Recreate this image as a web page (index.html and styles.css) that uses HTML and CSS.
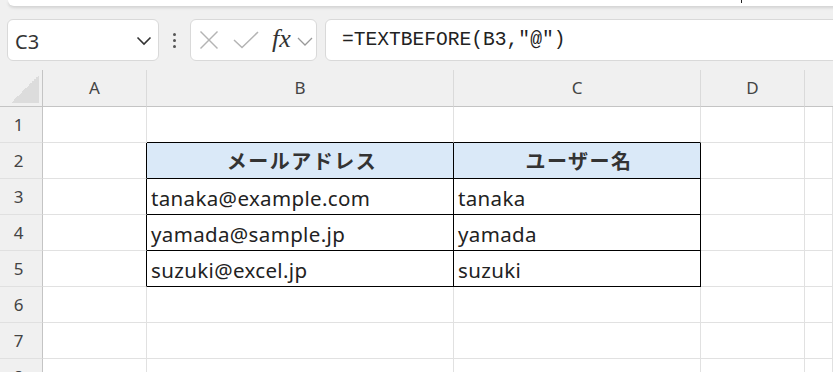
FILE: index.html
```html
<!DOCTYPE html>
<html lang="ja">
<head>
  <meta charset="UTF-8">
  <meta name="viewport" content="width=device-width, initial-scale=1.0">
  <title>TEXTBEFORE</title>
  <link rel="stylesheet" href="styles.css">
</head>
<body>

  <div class="ribbon"><span class="ribbon-tick"></span></div>

  <div class="formula-bar">
    <div class="name-box">
      <span class="name-text">C3</span>
      <svg class="chevron" width="16" height="10" viewBox="0 0 16 10">
        <polyline points="1.5,1.5 8,8 14.5,1.5" fill="none" stroke="#333" stroke-width="1.6"/>
      </svg>
    </div>
    <div class="more-dots">
      <span></span><span></span><span></span>
    </div>
    <div class="fx-box">
      <svg class="icon-x" width="20" height="20" viewBox="0 0 20 20">
        <line x1="1.5" y1="1.5" x2="18.5" y2="18.5" stroke="#b4b4b4" stroke-width="1.5"/>
        <line x1="18.5" y1="1.5" x2="1.5" y2="18.5" stroke="#b4b4b4" stroke-width="1.5"/>
      </svg>
      <svg class="icon-check" width="26" height="18" viewBox="0 0 26 18">
        <polyline points="1,9 9,16.5 25,1" fill="none" stroke="#b4b4b4" stroke-width="1.5"/>
      </svg>
      <span class="fx">fx</span>
      <svg class="chevron-small" width="16" height="9" viewBox="0 0 16 9">
        <polyline points="1,1 8,8 15,1" fill="none" stroke="#999" stroke-width="1.3"/>
      </svg>
    </div>
    <div class="formula-input">=TEXTBEFORE(B3,"@")</div>
  </div>

  <div class="sheet">
    <!-- column headers -->
    <div class="corner"><span class="corner-tri"></span></div>
    <div class="col-head">A</div>
    <div class="col-head">B</div>
    <div class="col-head">C</div>
    <div class="col-head">D</div>
    <div class="col-head last"></div>

    <!-- row 1 -->
    <div class="row-head">1</div>
    <div class="cell"></div>
    <div class="cell above"></div>
    <div class="cell above"></div>
    <div class="cell"></div>
    <div class="cell"></div>

    <!-- row 2 -->
    <div class="row-head">2</div>
    <div class="cell before"></div>
    <div class="cell tbl th">メールアドレス</div>
    <div class="cell tbl th">ユーザー名</div>
    <div class="cell"></div>
    <div class="cell"></div>

    <!-- row 3 -->
    <div class="row-head">3</div>
    <div class="cell before"></div>
    <div class="cell tbl">tanaka@example.com</div>
    <div class="cell tbl">tanaka</div>
    <div class="cell"></div>
    <div class="cell"></div>

    <!-- row 4 -->
    <div class="row-head">4</div>
    <div class="cell before"></div>
    <div class="cell tbl">yamada@sample.jp</div>
    <div class="cell tbl">yamada</div>
    <div class="cell"></div>
    <div class="cell"></div>

    <!-- row 5 -->
    <div class="row-head">5</div>
    <div class="cell before"></div>
    <div class="cell tbl">suzuki@excel.jp</div>
    <div class="cell tbl">suzuki</div>
    <div class="cell"></div>
    <div class="cell"></div>

    <!-- row 6 -->
    <div class="row-head">6</div>
    <div class="cell"></div>
    <div class="cell"></div>
    <div class="cell"></div>
    <div class="cell"></div>
    <div class="cell"></div>

    <!-- row 7 -->
    <div class="row-head">7</div>
    <div class="cell"></div>
    <div class="cell"></div>
    <div class="cell"></div>
    <div class="cell"></div>
    <div class="cell"></div>

    <!-- row 8 -->
    <div class="row-head">8</div>
    <div class="cell"></div>
    <div class="cell"></div>
    <div class="cell"></div>
    <div class="cell"></div>
    <div class="cell"></div>
  </div>

</body>
</html>
```

FILE: styles.css
```css
* {
  box-sizing: border-box;
}
body {
  margin: 0;
  background: #f0f0f0;
  font-family: "Noto Sans", "Noto Sans CJK JP", sans-serif;
  overflow: hidden;
  width: 833px;
  height: 372px;
}

/* ribbon edge at the very top */
.ribbon {
  height: 6px;
  margin-left: 8px;
  margin-right: -10px;
  background: #fff;
  border-radius: 0 0 8px 8px;
  box-shadow: 0 2px 3px rgba(0, 0, 0, 0.12);
  display: flex;
}
.ribbon-tick {
  width: 1px;
  height: 3px;
  margin-left: 733px;
  background: #222;
}

/* formula bar */
.formula-bar {
  display: flex;
  align-items: stretch;
  height: 42px;
  margin-top: 13px;
  padding-left: 7px;
}
.name-box {
  width: 152px;
  background: #fff;
  border: 1px solid #d9d9d9;
  border-radius: 6px;
  display: flex;
  align-items: center;
  padding: 0 6px 0 7px;
}
.name-text {
  flex: 1;
  font-size: 20px;
  color: #333;
  padding-top: 2px;
}
.chevron {
  margin-top: 2px;
}
.more-dots {
  width: 31px;
  display: flex;
  flex-direction: column;
  align-items: center;
  justify-content: center;
  gap: 3px;
}
.more-dots span {
  width: 3px;
  height: 3px;
  border-radius: 50%;
  background: #555;
}
.fx-box {
  width: 127px;
  background: #fff;
  border: 1px solid #d9d9d9;
  border-radius: 6px;
  display: flex;
  align-items: center;
  padding-left: 8px;
}
.icon-x {
  margin-right: 14px;
}
.icon-check {
  margin-right: 13px;
}
.fx {
  font-family: "Liberation Serif", serif;
  font-style: italic;
  font-weight: 400;
  font-size: 26px;
  color: #333;
  margin-right: 6px;
  padding-bottom: 2px;
}
.chevron-small {
  margin-top: 2px;
}
.formula-input {
  flex: 1;
  margin-left: 8px;
  margin-right: -12px;
  background: #fff;
  border: 1px solid #d9d9d9;
  border-radius: 6px 0 0 6px;
  display: flex;
  align-items: center;
  padding-left: 16px;
  font-family: "Liberation Mono", monospace;
  font-size: 19.6px;
  color: #222;
}

/* sheet grid */
.sheet {
  margin-top: 9px;
  display: grid;
  grid-template-columns: 43px 104px 307px 247px 104px 1fr;
  grid-template-rows: 37px repeat(8, 36px);
  background: #fff;
}
.corner,
.col-head {
  background: #f0f0f0;
  border-bottom: 1px solid #c4c4c4;
}
.corner {
  border-right: 1px solid #c4c4c4;
  display: flex;
  align-items: flex-end;
  justify-content: flex-end;
  padding: 0 3px 3px 0;
}
.corner-tri {
  width: 28px;
  height: 28px;
  background: linear-gradient(to top left, #dcdcdc 50%, transparent 50%);
}
.col-head {
  border-right: 1px solid #dadada;
  display: flex;
  align-items: center;
  justify-content: center;
  font-size: 17px;
  color: #444;
  padding-bottom: 1px;
}
.col-head.last {
  border-right: none;
}
.row-head {
  background: #f0f0f0;
  border-right: 1px solid #c4c4c4;
  border-bottom: 1px solid #e0e0e0;
  display: flex;
  align-items: center;
  justify-content: center;
  font-size: 17px;
  color: #444;
  padding-right: 5px;
}
.cell {
  border-right: 1px solid #e1e1e1;
  border-bottom: 1px solid #e1e1e1;
  display: flex;
  align-items: center;
  padding: 2px 0 0 4px;
  font-size: 20.5px;
  letter-spacing: 0.35px;
  color: #222;
  white-space: nowrap;
}
.cell.above {
  border-bottom-color: #000;
}
.cell.before {
  border-right-color: #000;
}
.cell.tbl {
  border-right-color: #000;
  border-bottom-color: #000;
}
.cell.th {
  background: #dae9f8;
  justify-content: center;
  padding-top: 0;
  font-family: "Noto Sans CJK JP", sans-serif;
  font-weight: 700;
  font-size: 20px;
  letter-spacing: 1.5px;
  color: #333;
}
```
